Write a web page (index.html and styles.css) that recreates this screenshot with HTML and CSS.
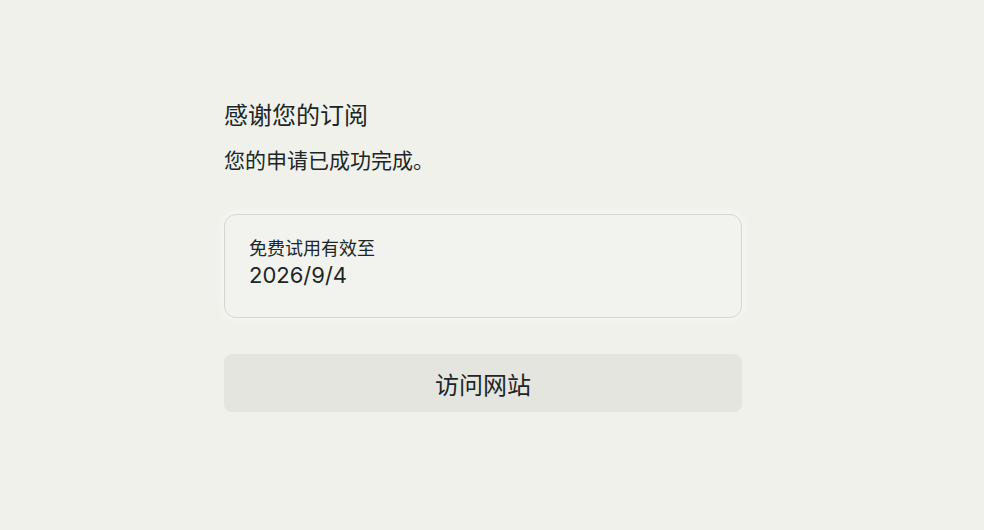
FILE: index.html
```html
<!DOCTYPE html>
<html lang="zh-CN">
<head>
<meta charset="utf-8">
<title>感谢您的订阅</title>
<link rel="stylesheet" href="styles.css">
</head>
<body>
<main class="page">
  <section class="panel">
    <h1 class="title">感谢您的订阅</h1>
    <p class="subtitle">您的申请已成功完成。</p>
    <div class="card">
      <div class="card-label">免费试用有效至</div>
      <div class="card-value">2026/9/4</div>
    </div>
    <button class="visit-btn" type="button">访问网站</button>
  </section>
</main>
</body>
</html>
```
FILE: styles.css
```css
html, body {
  margin: 0;
  padding: 0;
}
body {
  background: #f1f1ec;
  color: #1b2727;
  font-family: Inter, "Noto Sans CJK SC", sans-serif;
  width: 984px;
  height: 530px;
  overflow: hidden;
}
.page {
  padding-top: 99px;
  padding-left: 224px;
}
.panel {
  width: 518px;
  display: flex;
  flex-direction: column;
}
.title {
  margin: 0;
  font-size: 24px;
  line-height: 34px;
  font-weight: 400;
}
.subtitle {
  margin: 12px 0 0;
  font-size: 21px;
  line-height: 31px;
}
.card {
  margin-top: 38px;
  border: 1px solid #d6d6d0;
  border-radius: 12px;
  background: #f2f2ee;
  padding: 20px 24px 29px;
  box-shadow: 0 0 8px rgba(255,255,255,0.6);
}
.card-label {
  font-size: 18px;
  line-height: 27px;
}
.card-value {
  font-size: 22px;
  line-height: 26px;
}
.visit-btn {
  margin-top: 36px;
  height: 58px;
  border: none;
  border-radius: 8px;
  background: #e5e5e0;
  color: #1b2727;
  font-family: Inter, "Noto Sans CJK SC", sans-serif;
  font-size: 24px;
  padding: 0;
  cursor: pointer;
}
```
